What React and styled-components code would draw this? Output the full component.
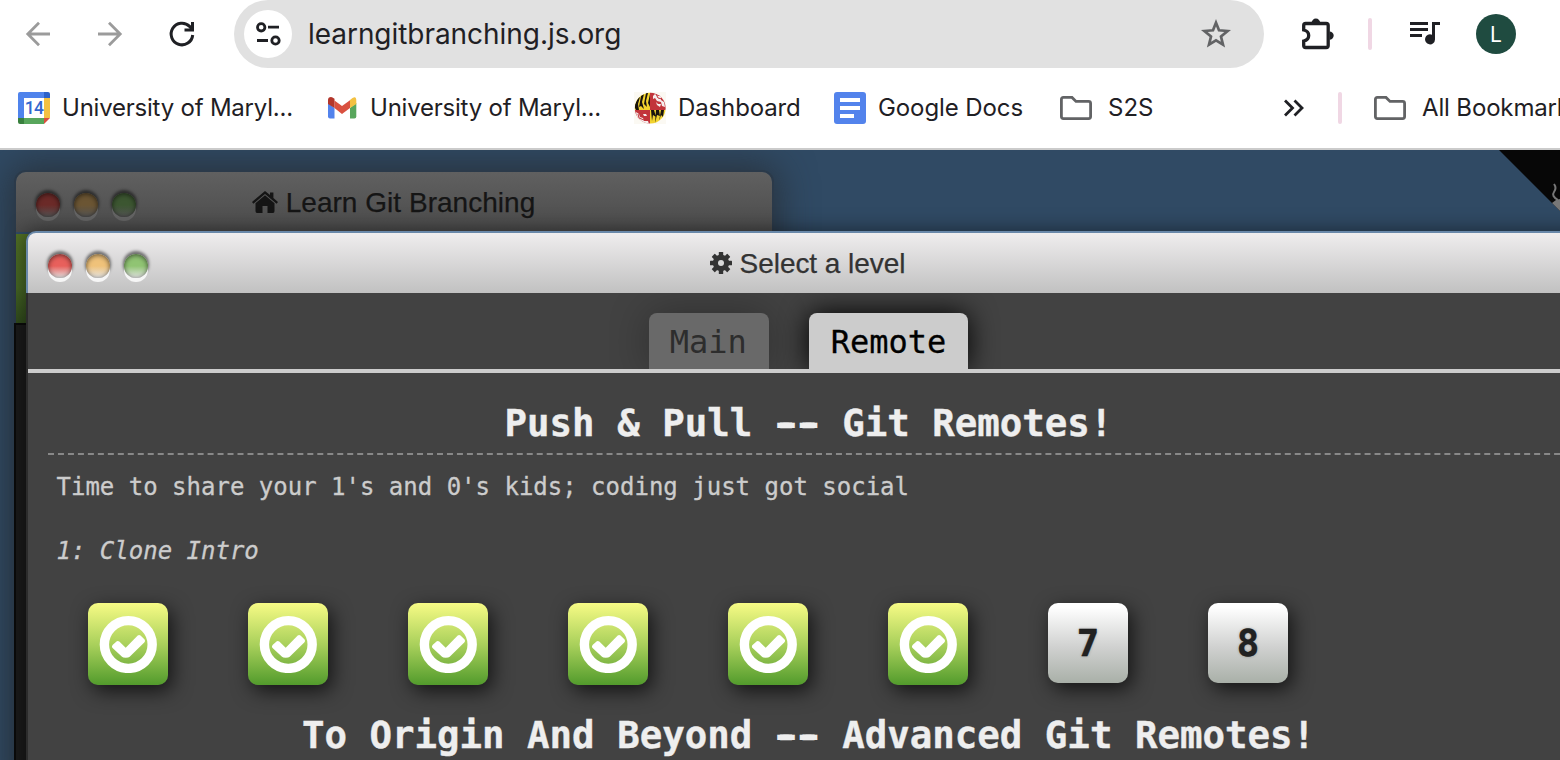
import React from "react";
import styled, { createGlobalStyle } from "styled-components";

const Global = createGlobalStyle`
  *{box-sizing:border-box}
  html,body{margin:0;padding:0;background:#fff;overflow:hidden}
  svg{display:block;flex:none}
`;
const Page = styled.div`
  width:1560px;height:760px;overflow:hidden;display:flex;flex-direction:column;
  font-family:Inter,"Liberation Sans",sans-serif;color:#1f2024;
`;
const Toolbar = styled.header`
  height:68px;flex:none;display:flex;align-items:center;padding-left:20px;
`;
const NavIcons = styled.nav`
  display:flex;gap:36px;width:214px;
`;
const AddressBar = styled.div`
  width:1030px;height:68px;border-radius:34px;background:#e1e1e1;
  display:flex;align-items:center;padding:0 30px 0 10px;
`;
const SiteInfo = styled.div`
  width:48px;height:48px;border-radius:50%;background:#fff;
  display:flex;align-items:center;justify-content:center;
`;
const Url = styled.span`
  flex:1;margin-left:16px;font-size:28px;line-height:40px;letter-spacing:${(p) => p.$track}px;white-space:nowrap;
`;
const Divider = styled.i`
  flex:none;width:4px;height:32px;border-radius:2px;background:#f0d7e4;margin:${(p) => p.$m};
`;
const Avatar = styled.div`
  width:40px;height:40px;border-radius:50%;background:#1f4b40;color:#fff;margin-left:34px;
  display:flex;align-items:center;justify-content:center;font-size:21px;
`;
const Extension = styled.div`margin-left:34px;`;
const Bookmarks = styled.div`
  height:82px;flex:none;display:flex;align-items:center;padding:0 0 0 18px;
  border-bottom:2px solid #cbcbcb;overflow:hidden;
`;
const Bookmark = styled.div`
  display:flex;align-items:center;flex:none;gap:${(p) => p.$gap || 12}px;width:${(p) => p.$w}px;
  font-size:24px;line-height:32px;letter-spacing:${(p) => p.$track || 0}px;white-space:nowrap;
`;
const Desktop = styled.main`
  position:relative;flex:1;overflow:hidden;
  background:#304a64;
`;
const Window = styled.section`
  position:absolute;border-radius:10px 10px 0 0;
`;
const BackWindow = styled(Window)`
  left:16px;top:22px;width:756px;height:620px;
  box-shadow:0 0 0 2px #2b3a4a,0 0 36px 6px rgba(38,42,46,.75);
`;
const FrontWindow = styled(Window)`
  left:26px;top:81px;width:1564px;height:640px;background:#424242;
  border-left:2px solid #2c2c2c;
  box-shadow:0 0 20px rgba(0,0,0,.5);
`;
const TitleBar = styled.div`
  height:${(p) => (p.$dim ? 60 : 62)}px;border-radius:10px 10px 0 0;display:flex;align-items:center;justify-content:center;
  position:relative;padding-top:1px;
  ${(p) => p.$dim
    ? "background:linear-gradient(#606060,#4b4b4b);color:#151515;"
    : "margin-left:-2px;border:2px solid #6988a9;border-bottom:0;background:linear-gradient(#efedee,#c1c1c1);color:#333;"}
`;
const Title = styled.h2`
  margin:0;display:flex;align-items:center;gap:7px;font:400 28px/32px "Liberation Sans",Arial,sans-serif;
  letter-spacing:${(p) => p.$track}px;white-space:nowrap;-webkit-text-stroke:.25px currentColor;
  & svg{position:relative;top:-1px;left:-1px}
`;
const Lights = styled.div`
  position:absolute;left:20px;top:21px;display:flex;gap:14px;
`;
const Light = styled.i`
  width:24px;height:24px;border-radius:50%;
  background:linear-gradient(${(p) => p.$c} 50%,${(p) => p.$end});
  box-shadow:inset 0 1px 5px rgba(0,0,0,.6),0 4px 0 ${(p) => (p.$dim ? "#656565" : "#f6f6f6")},0 -2px 3px 1px rgba(0,0,0,.5);
`;
const Toolstrip = styled.div`
  height:89px;margin-top:2px;background:linear-gradient(#506e24,#466624 60%,#304a1c);
`;
const Terminal = styled.div`
  height:480px;margin-left:-2px;background:#1a1a1a;border-top:2px solid #0a0a0a;border-left:2px solid #0a0a0a;
`;
const Tabs = styled.div`
  height:80px;padding-top:20px;display:flex;justify-content:center;gap:40px;border-bottom:4px solid #ccc;
  margin-right:1px;
  font:32px/56px "DejaVu Sans Mono",monospace;
`;
const Tab = styled.div`
  height:56px;padding:1px 22px 0;border-radius:8px 8px 0 0;
  ${(p) => p.$active
    ? "background:#ccc;color:#000;box-shadow:0 0 28px #000;-webkit-text-stroke:.3px #000;"
    : "background:#696969;color:#2d2d2d;box-shadow:0 0 40px rgba(0,0,0,.3);text-indent:-1px;"}
  clip-path:inset(-20px -40px 0 -40px);
`;
const Levels = styled.div`
  padding:0 0 0 20px;font-family:"DejaVu Sans Mono",monospace;
`;
const Heading = styled.h1`
  margin:0;height:82px;padding:28px 21px 0 0;text-align:center;color:#eee;
  font-size:37.4px;line-height:44px;font-weight:700;white-space:pre;-webkit-text-stroke:.4px #eee;
  ${(p) => p.$ruled && "border-bottom:2px dashed #888;"}
`;
const Dash = styled.span`
  text-shadow:3px 0 #eee,-3px 0 #eee;
`;
const Blurb = styled.p`
  margin:0;padding:16px 8.5px;font-size:24px;line-height:32px;color:#ccc;-webkit-text-stroke:.3px #ccc;
  font-style:${(p) => (p.$italic ? "italic" : "normal")};
`;
const Row = styled.div`
  display:flex;align-items:flex-start;gap:80px;padding:20px 40px 0;height:102px;
`;
const Level = styled.div`
  width:80px;height:${(p) => (p.$done ? 82 : 80)}px;border-radius:10px;flex:none;
  display:flex;align-items:center;justify-content:center;
  font-size:37.4px;font-weight:700;color:#222;-webkit-text-stroke:.4px #111;padding-bottom:1px;
  box-shadow:4px 6px 20px rgba(0,0,0,.7);text-shadow:0 0 3px rgba(0,0,0,.3);
  background:${(p) => (p.$done
    ? "linear-gradient(#f7fb85,#a7cf5a 52%,#529b2c)"
    : "linear-gradient(#fff 5%,#d0d1d0 55%,#a9b0a8)")};
`;
const Corner = styled.svg`position:absolute;right:0;top:0;`;
const Mirror = styled.span`transform:scaleX(-1);`;

const Back = () => (
  <svg width="36" height="36" viewBox="0 0 36 36" fill="none" stroke="#9b9b9b" strokeWidth="2.8">
    <path d="M30 18H8M19 6.800 7.800 18 19 29.200" />
  </svg>
);
const Reload = () => (
  <svg width="36" height="36" viewBox="0 0 36 36" fill="none" stroke="#1f2024" strokeWidth="3">
    <path d="M28.700 19A10.800 10.800 0 1 1 25.600 10.400L28 13" /><path d="M28.500 6v8h-8" />
  </svg>
);
const Tune = () => (
  <svg width="28" height="28" viewBox="0 0 28 28" fill="none" stroke="#1f2024" strokeWidth="2.8">
    <circle cx="7.200" cy="7.300" r="3.700" /><circle cx="21.500" cy="20.500" r="3.700" /><path d="M14 7.200h11M3 20.500h11" />
  </svg>
);
const Star = () => (
  <svg width="36" height="36" viewBox="0 0 36 36" fill="none" stroke="#626365" strokeWidth="2.7">
    <path d="M18 6.700 21 14.300l8.600.7-6.600 5.500 2 8.200-7-4.400-7 4.400 2-8.200-6.600-5.500 8.600-.7Z" />
  </svg>
);
const Puzzle = () => (
  <svg width="40" height="40" viewBox="0 0 40 40">
    <path d="M9.500 11.500H28Q30 11.500 30 13.500V33.500Q30 35.500 28 35.500H7.500Q5.500 35.500 5.500 33.500V29Q10.500 28 10.500 23.500T5.500 18V13.500Q5.500 11.500 7.500 11.500H10" transform="translate(.2 -2)" fill="none" stroke="#1f2024" strokeWidth="3.300" />
    <path d="M13.500 9a4.400 4.400 0 0 1 8.800 0ZM31.500 17.400a4.200 4.200 0 0 1 0 8.400Z" fill="#1f2024" />
  </svg>
);
const Queue = () => (
  <svg width="36" height="32" viewBox="0 0 36 32" fill="#1f2024">
    <path d="M4 4h18v3H4zM4 10h18v3H4zM4 16h12v3H4zM26 4h8v3h-5v14.500A5 5 0 1 1 26 16.800Z" />
  </svg>
);
const Calendar = () => (
  <svg width="32" height="32" viewBox="0 0 32 32">
    <path d="M2 0H26V6H6V26H0V2Q0 0 2 0Z" fill="#4f83ec" /><path d="M26 0h4q2 0 2 2v4h-6z" fill="#2d62c9" />
    <path d="M26 6h6v20h-6z" fill="#f3c142" /><path d="M6 26h20v6H6z" fill="#58a65c" />
    <path d="M0 26h6v6H2q-2 0-2-2z" fill="#38803d" /><path d="M26 26h6l-6 6z" fill="#da5040" /><path d="M6 6h20v20H6z" fill="#fff" />
    <text x="16" y="22" textAnchor="middle" fontSize="17.5" letterSpacing="-.8" fontWeight="500" fontFamily="Roboto,sans-serif" fill="#3367cf">14</text>
  </svg>
);
const Gmail = () => (
  <svg width="32" height="32" viewBox="0 0 32 32">
    <path d="M2 11l6.500 5V26.500H4q-2 0-2-2z" fill="#5383ec" /><path d="M24 16l6.300-5v13.500q0 2-2 2H24z" fill="#58a65c" />
    <path d="M8.500 8.500 16 14l8-5.800V16l-8 6-7.500-6z" fill="#d95140" />
    <path d="M2 12V8Q2 5 5 5q1.400 0 3.500 1.700V16z" fill="#b3362b" /><path d="M24 16V8q3-3 4.500-2.800Q30.500 5.500 30.300 9V12z" fill="#f3c142" />
  </svg>
);
const Maryland = () => (
  <svg width="32" height="32" viewBox="0 0 32 32">
    <defs><clipPath id="globe"><circle cx="16.200" cy="16.200" r="15.400" /></clipPath></defs>
    <path d="M0 0h32v32H0z" fill="#fbf9f3" />
    <g clipPath="url(#globe)">
      <path d="M0 0h16v18H0zM16 18h16v14H16z" fill="#f2d32e" /><path d="M16 0h16v18H16zM0 18h16v14H0z" fill="#c2343b" />
      <path d="M0 14 4 6 6 5 4 12 5 18H2ZM7 4l3-2-2 8 2 7-3-3-2 1ZM12 1l2 0-2 8 1 6-3-3ZM16 2v13l-2-4ZM17 18h3l2 7-3-2-1 6ZM22 18h3l1 6-3-1-2 8ZM27 18h3l-1 7-2-2-2 6Z" fill="#17130f" />
      <path d="M19 4l2-2 3 2 3 0 0 4 3 2 1 5-3-1-1-4-4-1-2-3-2 1ZM2 20l3 2 1 3 3 1 1 3 4 0 1 3H9L3 27ZM22 10l2 2 3 0-1 3-3-2ZM8 20l1 2 3 0 1 2-3 0Z" fill="#f5eeee" />
      <path d="M22 2l2 4 4 1M4 22l1 4 5 2" fill="none" stroke="#c2343b" strokeWidth="1" />
    </g>
  </svg>
);
const Docs = () => (
  <svg width="32" height="32" viewBox="0 0 32 32"><rect width="32" height="32" rx="3" fill="#5383ec" /><path d="M6 6h20v4H6zM6 14h20v4H6zM6 22h14v4H6z" fill="#fff" /></svg>
);
const Folder = () => (
  <svg width="32" height="24" viewBox="0 0 32 24" fill="none" stroke="#626365" strokeWidth="2.800">
    <path d="M3.400 1.400H12l4 4H28.600q2 0 2 2V20.600q0 2-2 2H3.400q-2 0-2-2V3.400q0-2 2-2Z" />
  </svg>
);
const More = () => (
  <svg width="24" height="20" viewBox="0 0 24 20" fill="none" stroke="#1f2024" strokeWidth="2.800"><path d="M4 2.500 11.500 10 4 17.500M13.500 2.500 21 10l-7.500 7.500" /></svg>
);
const House = () => (
  <svg width="26" height="22" viewBox="0 0 26 22" fill="#151515">
    <path d="M13 0 18 4V1.500h3.400V7L26 11l-1.400 1.700L13 3 1.400 12.700 0 11Z" /><path d="M13 4.200 22.500 12.200V20q0 2-1.500 2h-5.500v-7h-5v7H5q-1.500 0-1.500-2v-7.800Z" />
  </svg>
);
const Gear = () => (
  <svg width="22" height="22" viewBox="-11 -11 22 22" fill="#333">
    <g>{[0, 45, 90, 135].map((a) => <rect key={a} x="-2.200" y="-11" width="4.400" height="22" rx=".5" transform={`rotate(${a})`} />)}</g>
    <circle r="8.200" /><circle r="3" fill="#d9d9d9" />
  </svg>
);
const Check = () => (
  <svg width="58" height="58" viewBox="0 0 58 58">
    <circle cx="29.300" cy="29.500" r="23.900" strokeWidth="9.400" fill="none" stroke="#fff" />
    <path fill="#fff" d="M13.300 32.700Q12.300 31 13.800 29.700L17.800 26.300Q19 25.500 20.300 26.500L26.700 32.800 38.700 20.600Q40 19.500 41.500 20.500L45.600 24.500Q46.600 26 45.500 27.200L30.700 41.800Q29.500 42.800 26.700 42.800T23 41.800Z" />
  </svg>
);

function WindowLights({ dim }) {
  const colors = dim ? ["#6b2a28", "#6b5533", "#3c5631"] : ["#e8605c", "#efc27a", "#90c473"];
  return (
    <Lights>{colors.map((c) => <Light key={c} $c={c} $dim={dim} $end={dim ? "#555" : "#e6e6e6"} />)}</Lights>
  );
}

export default function App() {
  return (
    <Page>
      <Global />
      <Toolbar>
        <NavIcons><Back /><Mirror><Back /></Mirror><Reload /></NavIcons>
        <AddressBar>
          <SiteInfo><Tune /></SiteInfo>
          <Url $track={-0.05}>learngitbranching.js.org</Url>
          <Star />
        </AddressBar>
        <Extension><Puzzle /></Extension>
        <Divider $m="0 34px 0 30px" />
        <Queue />
        <Avatar>L</Avatar>
      </Toolbar>
      <Bookmarks>
        <Bookmark $w={308} $track={-0.22}><Calendar />University of Maryl...</Bookmark>
        <Bookmark $w={308} $track={-0.22}><Gmail />University of Maryl...</Bookmark>
        <Bookmark $w={200} $track={-0.13}><Maryland />Dashboard</Bookmark>
        <Bookmark $w={226} $track={-0.1}><Docs />Google Docs</Bookmark>
        <Bookmark $w={221} $gap={16}><Folder />S2S</Bookmark>
        <More />
        <Divider $m="0 32px 0 33px" />
        <Bookmark $w={240} $gap={16} $track={-0.15}><Folder />All Bookmarks</Bookmark>
      </Bookmarks>
      <Desktop>
        <Corner width="61" height="61" viewBox="0 0 61 61">
          <path d="M0 0h61v61z" fill="#070707" />
          <path d="M53 53l4-3 4-1v12z" fill="#777" />
          <path d="M55 34q3 4 0 8t4 8" fill="none" stroke="#777" strokeWidth="2" />
        </Corner>
        <BackWindow>
          <TitleBar $dim><WindowLights dim /><Title $track={0.03}><House />Learn Git Branching</Title></TitleBar>
          <Toolstrip /><Terminal />
        </BackWindow>
        <FrontWindow>
          <TitleBar><WindowLights /><Title $track={-0.05}><Gear />Select a level</Title></TitleBar>
          <Tabs><Tab>Main</Tab><Tab $active>Remote</Tab></Tabs>
          <Levels>
            <Heading $ruled>Push &amp; Pull <Dash>--</Dash> Git Remotes!</Heading>
            <Blurb>Time to share your 1's and 0's kids; coding just got social</Blurb>
            <Blurb $italic>1: Clone Intro</Blurb>
            <Row>
              {[1, 2, 3, 4, 5, 6].map((n) => <Level key={n} $done><Check /></Level>)}
              <Level>7</Level><Level>8</Level>
            </Row>
            <Heading>To Origin And Beyond <Dash>--</Dash> Advanced Git Remotes!</Heading>
          </Levels>
        </FrontWindow>
      </Desktop>
    </Page>
  );
}
